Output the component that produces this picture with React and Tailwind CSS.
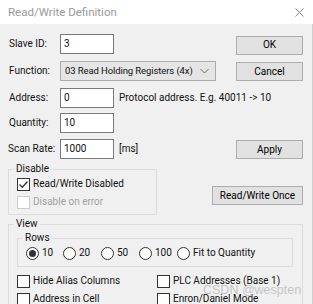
import React from "react";

const font = { fontFamily: "Roboto, 'Liberation Sans', sans-serif" };

function Btn({ children, className = "" }) {
  return (
    <div className={"flex items-center justify-center h-[19px] border border-[#adadad] bg-[#e1e1e1] text-[#000] whitespace-nowrap " + className}>
      {children}
    </div>
  );
}

function Input({ value }) {
  return (
    <div className="flex items-center w-[54px] h-[20px] border border-[#7a7a7a] bg-white pl-[3px]">
      {value}
    </div>
  );
}

function Check({ checked, disabled, label }) {
  return (
    <div className={"flex items-center h-[18px] whitespace-nowrap " + (disabled ? "text-[#a0a0a0]" : "")}>
      <div className={"w-[13px] h-[13px] border bg-white flex items-center justify-center shrink-0 " + (disabled ? "border-[#cccccc]" : "border-[#333333]")}>
        {checked && (
          <svg width="11" height="11" viewBox="0 0 11 11">
            <path d="M1.5 5.5 L4.3 8.3 L9.5 2.5" fill="none" stroke="#333" strokeWidth="1.3" />
          </svg>
        )}
      </div>
      <span className="ml-[3px]">{label}</span>
    </div>
  );
}

function Radio({ checked, label, className = "" }) {
  return (
    <div className={"flex items-center h-[18px] whitespace-nowrap " + className}>
      <div className="w-[13px] h-[13px] rounded-full border border-[#333333] bg-white flex items-center justify-center shrink-0">
        {checked && <div className="w-[7px] h-[7px] rounded-full bg-[#333333]" />}
      </div>
      <span className="ml-[3px]">{label}</span>
    </div>
  );
}

export default function App() {
  return (
    <div className="w-[313px] h-[304px] overflow-hidden bg-[#f0f0f0] text-[10px] leading-[12px] text-[#111] relative" style={font}>
      <div className="h-[24px] bg-white flex items-center justify-between pl-[8px] pr-[9px]">
        <span className="text-[11.5px] text-[#9a9a9a]">Read/Write Definition</span>
        <svg width="9" height="9" viewBox="0 0 9 9">
          <path d="M0.5 0.5 L8.5 8.5 M8.5 0.5 L0.5 8.5" stroke="#8a8a8a" strokeWidth="1" fill="none" />
        </svg>
      </div>
      <div className="h-[280px] border-r border-[#cfcfcf] pl-[8px] pr-[9px] pt-[10px]">
        <div className="flex items-center h-[20px]">
          <span className="w-[52px] pl-[1px]">Slave ID:</span>
          <Input value="3" />
          <Btn className="ml-auto w-[67px] mt-[2px]">OK</Btn>
        </div>
        <div className="flex items-center h-[20px] mt-[7px]">
          <span className="w-[52px] pl-[1px]">Function:</span>
          <div className="flex items-center justify-between w-[156px] h-[20px] border border-[#acacac] bg-[#e5e5e5] pl-[4px] pr-[6px] whitespace-nowrap">
            <span className="text-[9.5px] tracking-[-0.1px]">03 Read Holding Registers (4x)</span>
            <svg width="9" height="6" viewBox="0 0 9 6">
              <path d="M0.5 1 L4.5 5 L8.5 1" fill="none" stroke="#666" strokeWidth="1" />
            </svg>
          </div>
          <Btn className="ml-auto w-[67px] mt-[1px]">Cancel</Btn>
        </div>
        <div className="flex items-center h-[20px] mt-[7px] whitespace-nowrap">
          <span className="w-[52px] pl-[1px]">Address:</span>
          <Input value="0" />
          <span className="ml-[5px]">Protocol address. E.g. 40011 -&gt; 10</span>
        </div>
        <div className="flex items-center h-[20px] mt-[5px]">
          <span className="w-[52px] pl-[1px]">Quantity:</span>
          <Input value="10" />
        </div>
        <div className="flex items-center h-[20px] mt-[6px] whitespace-nowrap">
          <span className="w-[52px]">Scan Rate:</span>
          <Input value="1000" />
          <span className="ml-[5px]">[ms]</span>
          <Btn className="ml-auto w-[67px] mt-[1px]">Apply</Btn>
        </div>
        <div className="flex items-center mt-[4px]">
          <fieldset className="w-[149px] border border-[#dcdcdc] pl-[8px] pb-[3px]">
            <legend className="ml-[-3px] px-[2px]">Disable</legend>
            <Check checked label="Read/Write Disabled" />
            <Check disabled label="Disable on error" />
          </fieldset>
          <Btn className="ml-auto w-[91px] mt-[13px]">Read/Write Once</Btn>
        </div>
        <fieldset className="mt-[3px] border border-[#dcdcdc] pl-[8px] pb-[3px]">
          <legend className="ml-[-3px] px-[2px]">View</legend>
          <fieldset className="mt-[2px] w-[276px] border border-[#dcdcdc] pl-[8px] pb-[4px]">
            <legend className="ml-[-3px] px-[2px]">Rows</legend>
            <div className="flex items-center">
              <Radio checked label="10" className="w-[37px]" />
              <Radio label="20" className="w-[38px]" />
              <Radio label="50" className="w-[38px]" />
              <Radio label="100" className="w-[38px]" />
              <Radio label="Fit to Quantity" />
            </div>
          </fieldset>
          <div className="grid grid-cols-[140px_1fr] mt-[5px]">
            <Check label="Hide Alias Columns" />
            <Check label="PLC Addresses (Base 1)" />
            <Check label="Address in Cell" />
            <Check label="Enron/Daniel Mode" />
          </div>
        </fieldset>
      </div>
      <div className="absolute left-[203px] top-[283px] text-[12.5px] leading-[14px] text-[#b8b8b8]/80 whitespace-nowrap" style={{ fontFamily: "'Liberation Sans', sans-serif" }}>
        CSDN @wespten
      </div>
    </div>
  );
}
